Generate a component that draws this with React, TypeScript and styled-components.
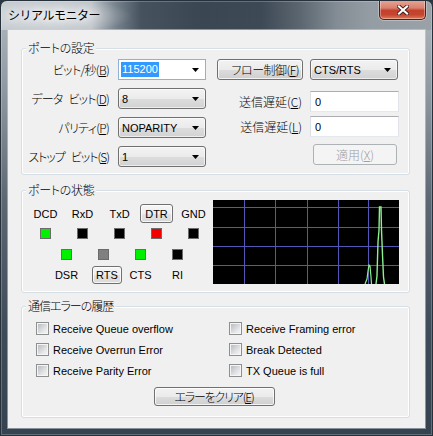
import React from "react";
import styled, { createGlobalStyle } from "styled-components";

const JP = `"Noto Sans CJK JP", "Liberation Sans", sans-serif`;
const LAT = `"Liberation Sans", "Noto Sans CJK JP", sans-serif`;

const GlobalStyle = createGlobalStyle`
  *, *::before, *::after { box-sizing: border-box; }
  html, body { margin: 0; padding: 0; }
  body {
    width: 433px;
    height: 436px;
    overflow: hidden;
    background: #2b3642;
    font-family: ${LAT};
  }
`;

const Win = styled.div`
  width: 433px;
  height: 436px;
  display: flex;
  flex-direction: column;
  border: 1px solid #26313c;
  border-radius: 7px 7px 0 0;
  overflow: hidden;
  background:
    radial-gradient(ellipse 80px 17px at 52px 15px, rgba(255, 255, 255, 0.55), rgba(255, 255, 255, 0) 100%),
    linear-gradient(
        to right,
        #c4cacf 0px,
        #bdc3c8 90px,
        #76828d 115px,
        #46525e 140px,
        #3a4652 200px,
        #3d4955 260px,
        #5c6771 300px,
        #838c94 335px,
        #959da4 370px,
        #9aa2a8 432px
      )
      0 0 / 100% 29px no-repeat,
    linear-gradient(to bottom, #b3bac0 0px, #8e98a1 90px, #5b6773 200px, #3e4b58 330px, #354350 436px);
  box-shadow: inset 0 0 0 1px rgba(255, 255, 255, 0.22);
`;

const TitleBar = styled.header`
  height: 29px;
  display: flex;
  padding-left: 7px;
`;

const TitleText = styled.div`
  flex: 1;
  margin-top: 6px;
  font-family: ${JP};
  font-size: 12px;
  line-height: 16px;
  letter-spacing: -0.5px;
  color: #000;
  text-shadow: 0 0 6px #fff, 0 0 10px rgba(255, 255, 255, 0.8);
`;

const CloseButton = styled.div`
  align-self: flex-start;
  margin-top: -1px;
  margin-right: 6px;
  width: 47px;
  height: 20px;
  display: flex;
  align-items: center;
  justify-content: center;
  border: 1px solid #4a2219;
  border-top: none;
  border-radius: 0 0 5px 5px;
  background: linear-gradient(to bottom, #e8a798 0%, #d8806e 42%, #c3412d 55%, #c4462f 78%, #e27a5a 100%);
  box-shadow: inset 0 0 0 1px rgba(255, 255, 255, 0.35), 0 0 0 1px rgba(255, 255, 255, 0.3);
`;

const Client = styled.main`
  flex: 1;
  margin: 0 7px 7px;
  background: #f0f0f0;
  padding: 18px 15px 0 13px;
  display: flex;
  flex-direction: column;
  box-shadow: 0 0 0 1px rgba(205, 212, 219, 0.55);
`;

const Group = styled.section<{ $h: number; $mt?: number }>`
  position: relative;
  height: ${(p) => p.$h}px;
  margin-top: ${(p) => p.$mt ?? 0}px;
  border: 1px solid #d5dfe5;
  border-radius: 3px;
  box-shadow: inset 0 0 0 1px #ffffff;
`;

const GroupTitle = styled.span<{ $ls?: number }>`
  position: absolute;
  top: -9px;
  left: 4px;
  padding: 0 2px;
  background: #f0f0f0;
  font-family: ${JP};
  font-feature-settings: "palt";
  font-weight: 300;
  font-size: 12px;
  line-height: 15px;
  letter-spacing: ${(p) => p.$ls ?? 0}px;
  color: #000;
`;

const Mn = styled.span`
  text-decoration: underline;
`;

const Gap = styled.span`
  display: inline-block;
  width: 6px;
`;

/* ---------- port settings ---------- */

const SettingsBody = styled.div`
  display: flex;
  padding-top: 10px;
`;

const LeftGrid = styled.div`
  display: grid;
  grid-template-columns: 88px 88px;
  grid-auto-rows: 21px;
  column-gap: 8px;
  row-gap: 8px;
`;

const RightCol = styled.div`
  margin-left: 11px;
  display: flex;
  flex-direction: column;
`;

const FormRow = styled.div<{ $mt?: number; $end?: boolean }>`
  display: flex;
  gap: 7px;
  height: 21px;
  margin-top: ${(p) => p.$mt ?? 0}px;
  justify-content: ${(p) => (p.$end ? "flex-end" : "flex-start")};
`;

const Label = styled.div<{ $w?: number; $ls?: number }>`
  ${(p) => (p.$w ? `width: ${p.$w}px;` : "")}
  display: flex;
  align-items: center;
  justify-content: flex-end;
  padding-right: 1px;
  font-family: ${JP};
  font-feature-settings: "palt";
  font-weight: 300;
  font-size: 12px;
  letter-spacing: ${(p) => p.$ls ?? 0}px;
  color: #000;
  white-space: nowrap;
`;

const Combo = styled.div<{ $w: number; $editable?: boolean }>`
  width: ${(p) => p.$w}px;
  height: 21px;
  display: flex;
  align-items: center;
  justify-content: space-between;
  padding: 0 6px 0 ${(p) => (p.$editable ? 2 : 3)}px;
  border: 1px solid ${(p) => (p.$editable ? "#8fb2d3" : "#707070")};
  border-radius: ${(p) => (p.$editable ? 0 : 3)}px;
  background: ${(p) =>
    p.$editable ? "#ffffff" : "linear-gradient(to bottom, #f3f3f3 0%, #ebebeb 50%, #dddddd 51%, #d2d2d2 100%)"};
  box-shadow: ${(p) => (p.$editable ? "none" : "inset 0 0 0 1px rgba(255,255,255,0.6)")};
  font-family: ${LAT};
  font-size: 11px;
  color: #000;
`;

const Selected = styled.span`
  background: #3399ff;
  color: #fff;
  padding: 1px 1px;
  line-height: 13px;
`;

const Edit = styled.div<{ $w: number }>`
  width: ${(p) => p.$w}px;
  height: 21px;
  display: flex;
  align-items: center;
  padding-left: 4px;
  background: #fff;
  border: 1px solid;
  border-color: #abadb3 #e2e3ea #e3e9ef #dbdfe6;
  font-family: ${LAT};
  font-size: 11px;
  color: #000;
`;

const Button = styled.button<{ $w: number; $h?: number; $align?: "center" | "end"; $ls?: number }>`
  width: ${(p) => p.$w}px;
  height: ${(p) => p.$h ?? 21}px;
  margin: 0;
  padding: 0 ${(p) => (p.$align === "end" ? 3 : 0)}px 0 0;
  display: flex;
  align-items: center;
  justify-content: ${(p) => (p.$align === "end" ? "flex-end" : "center")};
  border: 1px solid #707070;
  border-radius: 3px;
  background: linear-gradient(to bottom, #f2f2f2 0%, #ebebeb 50%, #dddddd 51%, #cfcfcf 100%);
  box-shadow: inset 0 0 0 1px rgba(255, 255, 255, 0.75);
  font-family: ${JP};
  font-feature-settings: "palt";
  font-weight: 300;
  font-size: 12px;
  letter-spacing: ${(p) => p.$ls ?? 0}px;
  color: #000;
  white-space: nowrap;
  &:disabled {
    border-color: #adb2b5;
    background: #f4f4f4;
    box-shadow: none;
    color: #a0a0a0;
  }
`;

const ApplyButton = styled(Button)`
  margin-right: 2px;
`;

const Toggle = styled(Button)<{ $shift?: number }>`
  font-family: ${LAT};
  font-weight: 400;
  font-size: 11px;
  margin-left: ${(p) => p.$shift ?? 0}px;
  background: linear-gradient(to bottom, #f6f6f6 0%, #efefef 50%, #e3e3e3 51%, #d9d9d9 100%);
`;

const Arrow = () => (
  <svg width="7" height="4" viewBox="0 0 7 4">
    <polygon points="0,0 7,0 3.5,4" fill="#000" />
  </svg>
);

/* ---------- port status ---------- */

const StatusBody = styled.div`
  display: flex;
`;

const SignalPanel = styled.div`
  width: 191px;
  display: flex;
  flex-direction: column;
`;

const SignalRow = styled.div<{ $indent: number; $h: number; $mt: number }>`
  display: flex;
  height: ${(p) => p.$h}px;
  margin-top: ${(p) => p.$mt}px;
  padding-left: ${(p) => p.$indent}px;
`;

const Cell = styled.div`
  width: 37px;
  display: flex;
  align-items: center;
  justify-content: center;
  font-family: ${LAT};
  font-size: 11px;
  color: #000;
`;

const Lamp = styled.span<{ $c: string }>`
  width: 11px;
  height: 11px;
  background: ${(p) => p.$c};
  border: 1px solid #6b6b6b;
`;

const ChartBox = styled.div`
  margin-top: 9px;
  width: 186px;
  height: 84px;
  background: #000;
  line-height: 0;
`;

const Chart = () => {
  const hs = [7.5, 27.5, 46.5, 65.5];
  const vs = [31.5, 62.5, 94.5, 125.5, 155.5];
  return (
    <svg width="186" height="84" viewBox="0 0 186 84">
      {hs.map((y) => (
        <line key={"h" + y} x1="0" x2="186" y1={y} y2={y} stroke="#5656b8" strokeWidth="1" />
      ))}
      {vs.map((x) => (
        <line key={"v" + x} x1={x} x2={x} y1="0" y2="84" stroke="#5656b8" strokeWidth="1" />
      ))}
      <polyline
        points="152,84 154,79 155,71 156,65 157,66 158,77 158.5,84"
        fill="none"
        stroke="#8cf08c"
        strokeWidth="1.2"
      />
      <polyline
        points="163,84 164,76 165,42 166,30 166.5,7 168,7 168.5,30 169.5,55 170.5,77 171.5,84"
        fill="none"
        stroke="#8cf08c"
        strokeWidth="1.4"
      />
    </svg>
  );
};

/* ---------- error history ---------- */

const CheckGrid = styled.div`
  display: grid;
  grid-template-columns: 193px auto;
  grid-auto-rows: 13px;
  row-gap: 8px;
  padding: 15px 0 0 14px;
`;

const Check = styled.label`
  display: flex;
  align-items: center;
  gap: 4px;
  font-family: ${LAT};
  font-size: 11px;
  color: #000;
  white-space: nowrap;
`;

const Box = styled.span`
  width: 13px;
  height: 13px;
  flex: none;
  border: 1px solid #8e8f8f;
  padding: 1px;
  background: linear-gradient(135deg, #b9bdc2 0%, #e6e7e8 70%, #f3f3f3 100%) content-box, #f5f5f5;
`;

const CenterRow = styled.div`
  display: flex;
  justify-content: center;
  margin-top: 10px;
  padding-right: 3px;
`;

const errors = [
  "Receive Queue overflow",
  "Receive Framing error",
  "Receive Overrun Error",
  "Break Detected",
  "Receive Parity Error",
  "TX Queue is full",
];

export default function App() {
  return (
    <>
      <GlobalStyle />
      <Win>
        <TitleBar>
          <TitleText>シリアルモニター</TitleText>
          <CloseButton>
            <svg width="12" height="10" viewBox="0 0 12 10">
              <path d="M2 1.5 L10 8.5 M10 1.5 L2 8.5" stroke="#3a1812" strokeWidth="3.8" strokeLinecap="square" />
              <path d="M2 1.5 L10 8.5 M10 1.5 L2 8.5" stroke="#ffffff" strokeWidth="2.2" strokeLinecap="square" />
            </svg>
          </CloseButton>
        </TitleBar>
        <Client>
          <Group $h={127}>
            <GroupTitle $ls={-0.3}>ポートの設定</GroupTitle>
            <SettingsBody>
              <LeftGrid>
                <Label $ls={-0.7}>
                  ビット/秒(<Mn>B</Mn>)
                </Label>
                <Combo $w={88} $editable>
                  <Selected>115200</Selected>
                  <Arrow />
                </Combo>
                <Label $ls={-0.8}>
                  データ<Gap />ビット(<Mn>D</Mn>)
                </Label>
                <Combo $w={88}>
                  <span>8</span>
                  <Arrow />
                </Combo>
                <Label $ls={-0.7}>
                  パリティ(<Mn>P</Mn>)
                </Label>
                <Combo $w={88}>
                  <span>NOPARITY</span>
                  <Arrow />
                </Combo>
                <Label $ls={-1}>
                  ストップ<Gap />ビット(<Mn>S</Mn>)
                </Label>
                <Combo $w={88}>
                  <span>1</span>
                  <Arrow />
                </Combo>
              </LeftGrid>
              <RightCol>
                <FormRow>
                  <Button $w={86} $align="end" $ls={-0.5}>
                    フロー制御(<Mn>F</Mn>)
                  </Button>
                  <Combo $w={88}>
                    <span>CTS/RTS</span>
                    <Arrow />
                  </Combo>
                </FormRow>
                <FormRow $mt={11}>
                  <Label $w={86}>
                    送信遅延(<Mn>C</Mn>)
                  </Label>
                  <Edit $w={89}>0</Edit>
                </FormRow>
                <FormRow $mt={4}>
                  <Label $w={86}>
                    送信遅延(<Mn>L</Mn>)
                  </Label>
                  <Edit $w={89}>0</Edit>
                </FormRow>
                <FormRow $mt={7} $end>
                  <ApplyButton $w={84} disabled>
                    適用(<Mn>X</Mn>)
                  </ApplyButton>
                </FormRow>
              </RightCol>
            </SettingsBody>
          </Group>

          <Group $h={103} $mt={15}>
            <GroupTitle $ls={-0.3}>ポートの状態</GroupTitle>
            <StatusBody>
              <SignalPanel>
                <SignalRow $indent={5} $h={19} $mt={13}>
                  <Cell>DCD</Cell>
                  <Cell>RxD</Cell>
                  <Cell>TxD</Cell>
                  <Cell>
                    <Toggle $w={33} $h={19}>
                      DTR
                    </Toggle>
                  </Cell>
                  <Cell>GND</Cell>
                </SignalRow>
                <SignalRow $indent={5} $h={11} $mt={5}>
                  <Cell>
                    <Lamp $c="#00f000" />
                  </Cell>
                  <Cell>
                    <Lamp $c="#000" />
                  </Cell>
                  <Cell>
                    <Lamp $c="#000" />
                  </Cell>
                  <Cell>
                    <Lamp $c="#f00000" />
                  </Cell>
                  <Cell>
                    <Lamp $c="#000" />
                  </Cell>
                </SignalRow>
                <SignalRow $indent={26} $h={11} $mt={10}>
                  <Cell>
                    <Lamp $c="#00f000" />
                  </Cell>
                  <Cell>
                    <Lamp $c="#808080" />
                  </Cell>
                  <Cell>
                    <Lamp $c="#00f000" />
                  </Cell>
                  <Cell>
                    <Lamp $c="#000" />
                  </Cell>
                </SignalRow>
                <SignalRow $indent={26} $h={18} $mt={6}>
                  <Cell>DSR</Cell>
                  <Cell>
                    <Toggle $w={33} $h={18} $shift={7}>
                      RTS
                    </Toggle>
                  </Cell>
                  <Cell>CTS</Cell>
                  <Cell>RI</Cell>
                </SignalRow>
              </SignalPanel>
              <ChartBox>
                <Chart />
              </ChartBox>
            </StatusBody>
          </Group>

          <Group $h={112} $mt={13}>
            <GroupTitle $ls={-1}>通信エラーの履歴</GroupTitle>
            <CheckGrid>
              {errors.map((e) => (
                <Check key={e}>
                  <Box />
                  {e}
                </Check>
              ))}
            </CheckGrid>
            <CenterRow>
              <Button $w={121} $h={19} $ls={-1.2}>
                エラーをクリア(<Mn>E</Mn>)
              </Button>
            </CenterRow>
          </Group>
        </Client>
      </Win>
    </>
  );
}
